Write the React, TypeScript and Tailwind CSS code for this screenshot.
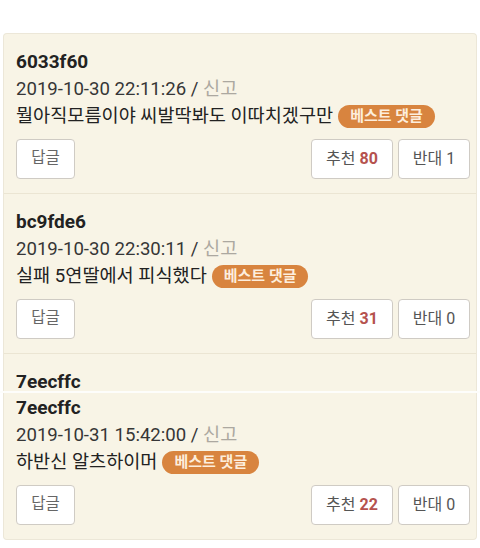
import React from 'react';

type Comment = {
  id: string;
  date: string;
  text: string;
  up: number;
  down: number;
};

const comments: Comment[] = [
  { id: '6033f60', date: '2019-10-30 22:11:26', text: '뭘아직모름이야 씨발딱봐도 이따치겠구만', up: 80, down: 1 },
  { id: 'bc9fde6', date: '2019-10-30 22:30:11', text: '실패 5연딸에서 피식했다', up: 31, down: 0 },
  { id: '7eecffc', date: '2019-10-31 15:42:00', text: '하반신 알츠하이머', up: 22, down: 0 },
];

function CommentBody({ c }: { c: Comment }) {
  return (
    <>
      <div className="h-7 flex items-center text-[19px] font-bold text-[#222]">{c.id}</div>
      <div className="h-[27px] flex items-center text-[18.6px] text-[#363636]">
        {c.date} /&nbsp;<span className="text-[#aca8a0]">신고</span>
      </div>
      <div className="h-[27px] flex items-center text-[18.6px] text-[#222]">
        <span>{c.text}</span>
        <span className="ml-[5px] h-[23px] px-3 rounded-full bg-[#d8843f] text-[#fdeedd] text-[15px] font-bold flex items-center">
          베스트 댓글
        </span>
      </div>
      <div className="mt-[9px] flex items-center pr-[6px]">
        <button className="h-10 w-[59px] bg-white border border-[#cfcbc4] rounded-[4px] text-[15.5px] text-[#666]">
          답글
        </button>
        <div className="ml-auto flex gap-[5px]">
          <button className="h-10 w-[82px] bg-white border border-[#cfcbc4] rounded-[4px] text-[16px] text-[#555]">
            추천 <span className="font-bold text-[#b5524e]">{c.up}</span>
          </button>
          <button className="h-10 w-[72px] bg-white border border-[#cfcbc4] rounded-[4px] text-[16px] text-[#555]">
            반대 {c.down}
          </button>
        </div>
      </div>
    </>
  );
}

export default function App() {
  const font = { fontFamily: 'Roboto, "Noto Sans CJK KR", sans-serif' };
  return (
    <div className="w-[480px] h-[548px] bg-white pt-[33px]" style={font}>
      {/* first shot */}
      <div className="mx-[3px] bg-[#f8f4e6] border-x border-t border-[#ece7d8] rounded-t-[4px]">
        {comments.slice(0, 2).map((c) => (
          <div key={c.id} className="pl-3 pt-[14px] pb-[14px] border-b border-[#ebe5d3]">
            <CommentBody c={c} />
          </div>
        ))}
        <div className="h-[37px] pl-3 pt-[19px]">
          <div className="h-[18px] leading-[18px] text-[19px] font-bold text-[#222]">{comments[2].id}</div>
        </div>
      </div>
      {/* stitched second shot */}
      <div className="h-[2px] bg-[#fdfdfb]" />
      <div className="mx-[3px] bg-[#f8f4e6] border-x border-b border-[#ece7d8] rounded-b-[4px] pl-3 pt-px pb-[14px]">
        <CommentBody c={comments[2]} />
      </div>
    </div>
  );
}
